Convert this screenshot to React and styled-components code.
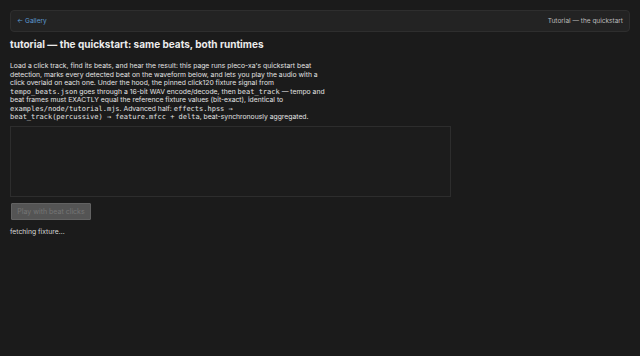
import React from "react";
import styled, { createGlobalStyle } from "styled-components";

const GlobalStyle = createGlobalStyle`
  html, body {
    margin: 0;
    background: #1b1b1b;
  }
  body {
    font-family: Inter, "Noto Sans", sans-serif;
    color: #e4e4e4;
  }
`;

const Page = styled.div`
  padding: 10px;
`;

const Nav = styled.nav`
  display: flex;
  justify-content: space-between;
  align-items: center;
  height: 20px;
  padding: 0 6px;
  background: #232323;
  border: 1px solid #2e2e2e;
  border-radius: 4px;
  font-size: 6.5px;
`;

const BackLink = styled.a`
  color: #5d9bd3;
  text-decoration: none;
`;

const Crumb = styled.span`
  color: #bdbdbd;
`;

const Title = styled.h1`
  margin: 5px 0 11px;
  font-size: 10px;
  line-height: 14px;
  font-weight: 700;
  color: #ececec;
`;

const Intro = styled.p`
  margin: 0;
  max-width: 380px;
  font-size: 6.8px;
  line-height: 8.5px;
  color: #e2e2e2;
`;

const Code = styled.code`
  font-family: "DejaVu Sans Mono", monospace;
  font-size: 7px;
`;

const Wave = styled.div`
  margin-top: 4px;
  width: 439px;
  height: 69px;
  border: 1px solid #2d2d2d;
  background: #1c1c1c;
`;

const PlayButton = styled.button`
  display: block;
  margin: 6px 0 0 1px;
  width: 80px;
  height: 17px;
  padding: 0;
  background: #545454;
  border: 1px solid #626262;
  border-radius: 1px;
  color: #747474;
  font-family: Inter, sans-serif;
  font-size: 7px;
`;

const Status = styled.div`
  margin-top: 7px;
  font-size: 6.8px;
  color: #d6d6d6;
`;

export default function App() {
  return (
    <Page>
      <GlobalStyle />
      <Nav>
        <BackLink href="#">← Gallery</BackLink>
        <Crumb>Tutorial — the quickstart</Crumb>
      </Nav>
      <Title>tutorial — the quickstart: same beats, both runtimes</Title>
      <Intro>
        Load a click track, find its beats, and hear the result: this page runs
        pleco-xa's quickstart beat
        <br />
        detection, marks every detected beat on the waveform below, and lets
        you play the audio with a
        <br />
        click overlaid on each one. Under the hood, the pinned click120 fixture
        signal from
        <br />
        <Code>tempo_beats.json</Code> goes through a 16-bit WAV encode/decode,
        then <Code>beat_track</Code> — tempo and
        <br />
        beat frames must EXACTLY equal the reference fixture values
        (bit-exact), identical to
        <br />
        <Code>examples/node/tutorial.mjs</Code>. Advanced half:{" "}
        <Code>effects.hpss →</Code>
        <br />
        <Code>beat_track(percussive) → feature.mfcc + delta</Code>,
        beat-synchronously aggregated.
      </Intro>
      <Wave />
      <PlayButton disabled>Play with beat clicks</PlayButton>
      <Status>fetching fixture...</Status>
    </Page>
  );
}
